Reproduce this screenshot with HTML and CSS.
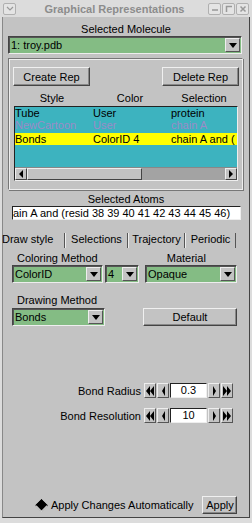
FILE: index.html
```html
<!DOCTYPE html>
<html>
<head>
<meta charset="utf-8">
<link rel="stylesheet" href="styles.css">
</head>
<body>
<div class="win">
  <div class="titlebar">
    <span class="tbtn tl"><svg width="8" height="6" viewBox="0 0 8 6"><path d="M1 1 L4 4 L7 1" fill="none" stroke="#999" stroke-width="1.2"/></svg></span>
    <span class="ttl">Graphical Representations</span>
    <span class="tbtn"><svg width="8" height="8" viewBox="0 0 8 8"><path d="M1 5 H7" stroke="#999" stroke-width="1.5"/></svg></span>
    <span class="tbtn"><svg width="8" height="8" viewBox="0 0 8 8"><path d="M1.5 7 V1.5 H7" fill="none" stroke="#999" stroke-width="1.5"/></svg></span>
    <span class="tbtn"><svg width="8" height="8" viewBox="0 0 8 8"><path d="M1.5 1.5 L6.5 6.5 M6.5 1.5 L1.5 6.5" stroke="#999" stroke-width="1.5"/></svg></span>
  </div>
  <div class="body">
    <div class="lbl center mol-lbl">Selected Molecule</div>
    <div class="menu mol"><span class="mtext">1: troy.pdb</span><span class="arrow"><i class="tri"></i></span></div>

    <div class="group">
      <div class="btnrow">
        <div class="btn">Create Rep</div>
        <div class="btn">Delete Rep</div>
      </div>
      <div class="hdr"><span>Style</span><span>Color</span><span>Selection</span></div>
      <div class="list">
        <div class="rows">
          <div class="row"><span>Tube</span><span>User</span><span>protein</span></div>
          <div class="row off"><span>NewCartoon</span><span>User</span><span>chain A</span></div>
          <div class="row sel"><span>Bonds</span><span>ColorID 4</span><span>chain A and (</span></div>
        </div>
        <div class="hscroll">
          <span class="sarrow"><svg width="6" height="8" viewBox="0 0 6 8"><path d="M5 0 L1 4 L5 8Z" fill="#000"/></svg></span>
          <span class="slider"></span>
          <span class="trough"></span>
          <span class="sarrow"><svg width="6" height="8" viewBox="0 0 6 8"><path d="M1 0 L5 4 L1 8Z" fill="#000"/></svg></span>
        </div>
      </div>
    </div>

    <div class="lbl center atoms-lbl">Selected Atoms</div>
    <div class="entry">ain A and  (resid 38 39 40 41 42 43 44 45 46)</div>

    <div class="tabs">
      <span class="tab t1">Draw style</span>
      <span class="tab t2">Selections</span>
      <span class="tab t3">Trajectory</span>
      <span class="tab t4">Periodic</span>
    </div>

    <div class="labels2">
      <span class="lbl cm">Coloring Method</span>
      <span class="lbl mat">Material</span>
    </div>
    <div class="menus2">
      <div class="menu m-color"><span class="mtext">ColorID</span><span class="arrow"><i class="tri"></i></span></div>
      <div class="menu m-four"><span class="mtext">4</span><span class="arrow"><i class="tri"></i></span></div>
      <div class="menu m-mat"><span class="mtext">Opaque</span><span class="arrow"><i class="tri"></i></span></div>
    </div>

    <div class="lbl dm">Drawing Method</div>
    <div class="menus3">
      <div class="menu m-bonds"><span class="mtext">Bonds</span><span class="arrow"><i class="tri"></i></span></div>
      <div class="btn def">Default</div>
    </div>

    <div class="spins">
      <div class="spin">
        <span class="slbl">Bond Radius</span>
        <span class="sb"><svg width="8" height="10" viewBox="0 0 8 10"><path d="M4 0 L0 5 L4 10Z M8 0 L4 5 L8 10Z" fill="#000"/></svg></span>
        <span class="sb"><svg width="5" height="10" viewBox="0 0 5 10"><path d="M4 0 L1 5 L4 10Z" fill="#000"/></svg></span>
        <span class="sval">0.3</span>
        <span class="sb"><svg width="5" height="10" viewBox="0 0 5 10"><path d="M1 0 L4 5 L1 10Z" fill="#000"/></svg></span>
        <span class="sb"><svg width="8" height="10" viewBox="0 0 8 10"><path d="M0 0 L4 5 L0 10Z M4 0 L8 5 L4 10Z" fill="#000"/></svg></span>
      </div>
      <div class="spin">
        <span class="slbl">Bond Resolution</span>
        <span class="sb"><svg width="8" height="10" viewBox="0 0 8 10"><path d="M4 0 L0 5 L4 10Z M8 0 L4 5 L8 10Z" fill="#000"/></svg></span>
        <span class="sb"><svg width="5" height="10" viewBox="0 0 5 10"><path d="M4 0 L1 5 L4 10Z" fill="#000"/></svg></span>
        <span class="sval">10</span>
        <span class="sb"><svg width="5" height="10" viewBox="0 0 5 10"><path d="M1 0 L4 5 L1 10Z" fill="#000"/></svg></span>
        <span class="sb"><svg width="8" height="10" viewBox="0 0 8 10"><path d="M0 0 L4 5 L0 10Z M4 0 L8 5 L4 10Z" fill="#000"/></svg></span>
      </div>
    </div>

    <div class="footer">
      <span class="radio"></span>
      <span class="auto">Apply Changes Automatically</span>
      <span class="btn apply">Apply</span>
    </div>
  </div>
</div>
</body>
</html>
```

FILE: styles.css
```css
html, body { margin: 0; padding: 0; }
body {
  width: 252px; height: 523px; overflow: hidden;
  background: #c3c3c3;
  font-family: "Liberation Sans", Arial, sans-serif;
  font-size: 11px; color: #000;
}
.win {
  width: 252px; height: 523px; box-sizing: border-box;
  display: flex; flex-direction: column;
  border-left: 2px solid #dcdcdc;
  border-right: 2px solid #dcdcdc;
  border-bottom: 5px solid #dcdcdc;
  background: #c3c3c3;
}
.titlebar {
  height: 17px; box-sizing: border-box;
  background: #dcdcdc;
  display: flex; align-items: center;
  margin: 0 -2px;
  padding: 0 3px 0 3px;
}
.tbtn {
  width: 13px; height: 12px; box-sizing: border-box;
  border: 1px solid #b0b0b0; border-radius: 2px;
  background: #e4e4e4;
  display: flex; align-items: center; justify-content: center;
  margin-left: 1px;
}
.tbtn.tl { margin-left: 0; }
.ttl {
  flex: 1; text-align: center; color: #8c8c8c; font-weight: bold;
  font-size: 11px; padding-left: 6px;
}
.body {
  flex: 1; display: flex; flex-direction: column;
  border-left: 1px solid #888; border-right: 1px solid #444;
  border-bottom: 1px solid #444;
  padding: 0 5px;
}
.lbl { line-height: 12px; }
.center { text-align: center; }
.mol-lbl { margin-top: 6px; }
.menu {
  background: #84bc84; height: 18px; box-sizing: border-box;
  border: 1px solid; border-color: #444 #eee #eee #444;
  display: flex; align-items: center;
  box-shadow: inset 1px 1px 0 #555;
}
.mtext { flex: 1; padding-left: 2px; white-space: nowrap; overflow: hidden; }
.arrow {
  width: 15px; height: 14px; box-sizing: border-box;
  background: #c3c3c3;
  border: 1px solid; border-color: #eee #555 #555 #eee;
  display: flex; align-items: center; justify-content: center;
  margin-right: 1px;
}
.tri {
  width: 0; height: 0;
  border-left: 4px solid transparent; border-right: 4px solid transparent;
  border-top: 5px solid #000;
  margin-top: 1px;
}
.mol { margin-top: 1px; margin-right: 2px; }

.group {
  margin-top: 4px; margin-right: 1px;
  border: 1px solid; border-color: #777 #eee #eee #777;
  box-shadow: inset 1px 1px 0 #eee, 1px 1px 0 #777;
  height: 132px; box-sizing: border-box;
  padding: 8px 3px 0 4px;
  display: flex; flex-direction: column;
}
.btnrow { display: flex; justify-content: space-between; }
.btn {
  height: 19px; box-sizing: border-box;
  border: 1px solid; border-color: #f0f0f0 #444 #444 #f0f0f0;
  box-shadow: inset -1px -1px 0 #888;
  display: flex; align-items: center; justify-content: center;
  background: #c3c3c3;
  white-space: nowrap;
}
.btnrow .btn { width: 77px; }
.hdr {
  display: flex; margin-top: 5px; height: 14px; align-items: center;
}
.hdr span { flex: 1; text-align: center; }
.hdr span:first-child { flex: 0 0 78px; }
.hdr span:nth-child(2) { flex: 0 0 78px; }
.list {
  margin-top: 1px; height: 75px; box-sizing: border-box;
  background: #3db3bf;
  border: 1px solid; border-color: #222 #eee #eee #222;
  display: flex; flex-direction: column;
  margin-left: 1px; margin-right: 1px;
}
.rows { flex: 1; }
.row { display: flex; height: 12px; line-height: 12px; white-space: nowrap; overflow: hidden; }
.row span { flex: 0 0 78px; overflow: hidden; }
.row span:last-child { flex: 1; }
.row.off { color: #9b8bc7; }
.row.sel { background: #ffff00; margin-top: 2px; height: 12px; }
.hscroll {
  height: 12px; display: flex; background: #a3a3a3;
  border-top: 1px solid #888;
}
.sarrow {
  width: 12px; box-sizing: border-box; background: #c3c3c3;
  border: 1px solid; border-color: #eee #444 #444 #eee;
  display: flex; align-items: center; justify-content: center;
}
.slider {
  width: 115px; background: #c3c3c3; box-sizing: border-box;
  border: 1px solid; border-color: #eee #444 #444 #eee;
}
.trough { flex: 1; }

.atoms-lbl { margin-top: 3px; }
.entry {
  margin: 1px 3px 0 4px; height: 14px; box-sizing: border-box; background: #fff;
  border: 1px solid; border-color: #222 #eee #eee #222;
  line-height: 12px; white-space: nowrap; overflow: hidden;
}
.tabs {
  display: flex; margin-top: 13px; margin-left: -7px; height: 15px;
}
.tab {
  height: 15px; box-sizing: border-box; line-height: 13px;
  border-left: 1px solid #eee; border-right: 1px solid #555;
  padding: 0 1px; text-align: center; white-space: nowrap;
}
.t1 { width: 64px; border-left: none; text-align: left; }
.t2 { width: 63px; }
.t3 { width: 57px; }
.t4 { width: 51px; }

.labels2 { display: flex; margin-top: 4px; height: 12px; }
.cm { margin-left: 9px; }
.mat { margin-left: 69px; }
.menus2 { display: flex; margin: 1px 0 0 4px; gap: 2px; }
.m-color { width: 91px; }
.m-four { width: 34px; }
.m-mat { width: 92px; margin-left: 4px; }
.dm { margin-top: 11px; margin-left: 9px; }
.menus3 { display: flex; margin: 2px 0 0 4px; }
.m-bonds { width: 93px; }
.def { width: 94px; margin-left: 38px; height: 18px; }

.spins { margin: 57px 10px 0 0; display: flex; flex-direction: column; gap: 10px; }
.spin { display: flex; align-items: center; height: 15px; }
.slbl { flex: 1; text-align: right; padding-right: 3px; }
.sb {
  width: 12px; height: 15px; box-sizing: border-box; background: #c3c3c3;
  border: 1px solid; border-color: #eee #555 #555 #eee;
  display: flex; align-items: center; justify-content: center;
  margin-right: 1px;
}
.sval {
  width: 37px; height: 15px; box-sizing: border-box; background: #fff;
  border: 1px solid; border-color: #222 #eee #eee #222;
  text-align: center; line-height: 13px; margin-right: 1px;
}

.footer {
  margin-top: auto; margin-bottom: 3px;
  display: flex; align-items: center; height: 18px;
}
.radio {
  width: 7px; height: 7px; background: #000; transform: rotate(45deg);
  margin-left: 29px; margin-right: 5px;
  border: 1px solid; border-color: #000 #eee #eee #000;
}
.auto { white-space: nowrap; }
.apply { width: 35px; height: 18px; margin-left: 9px; }
```
